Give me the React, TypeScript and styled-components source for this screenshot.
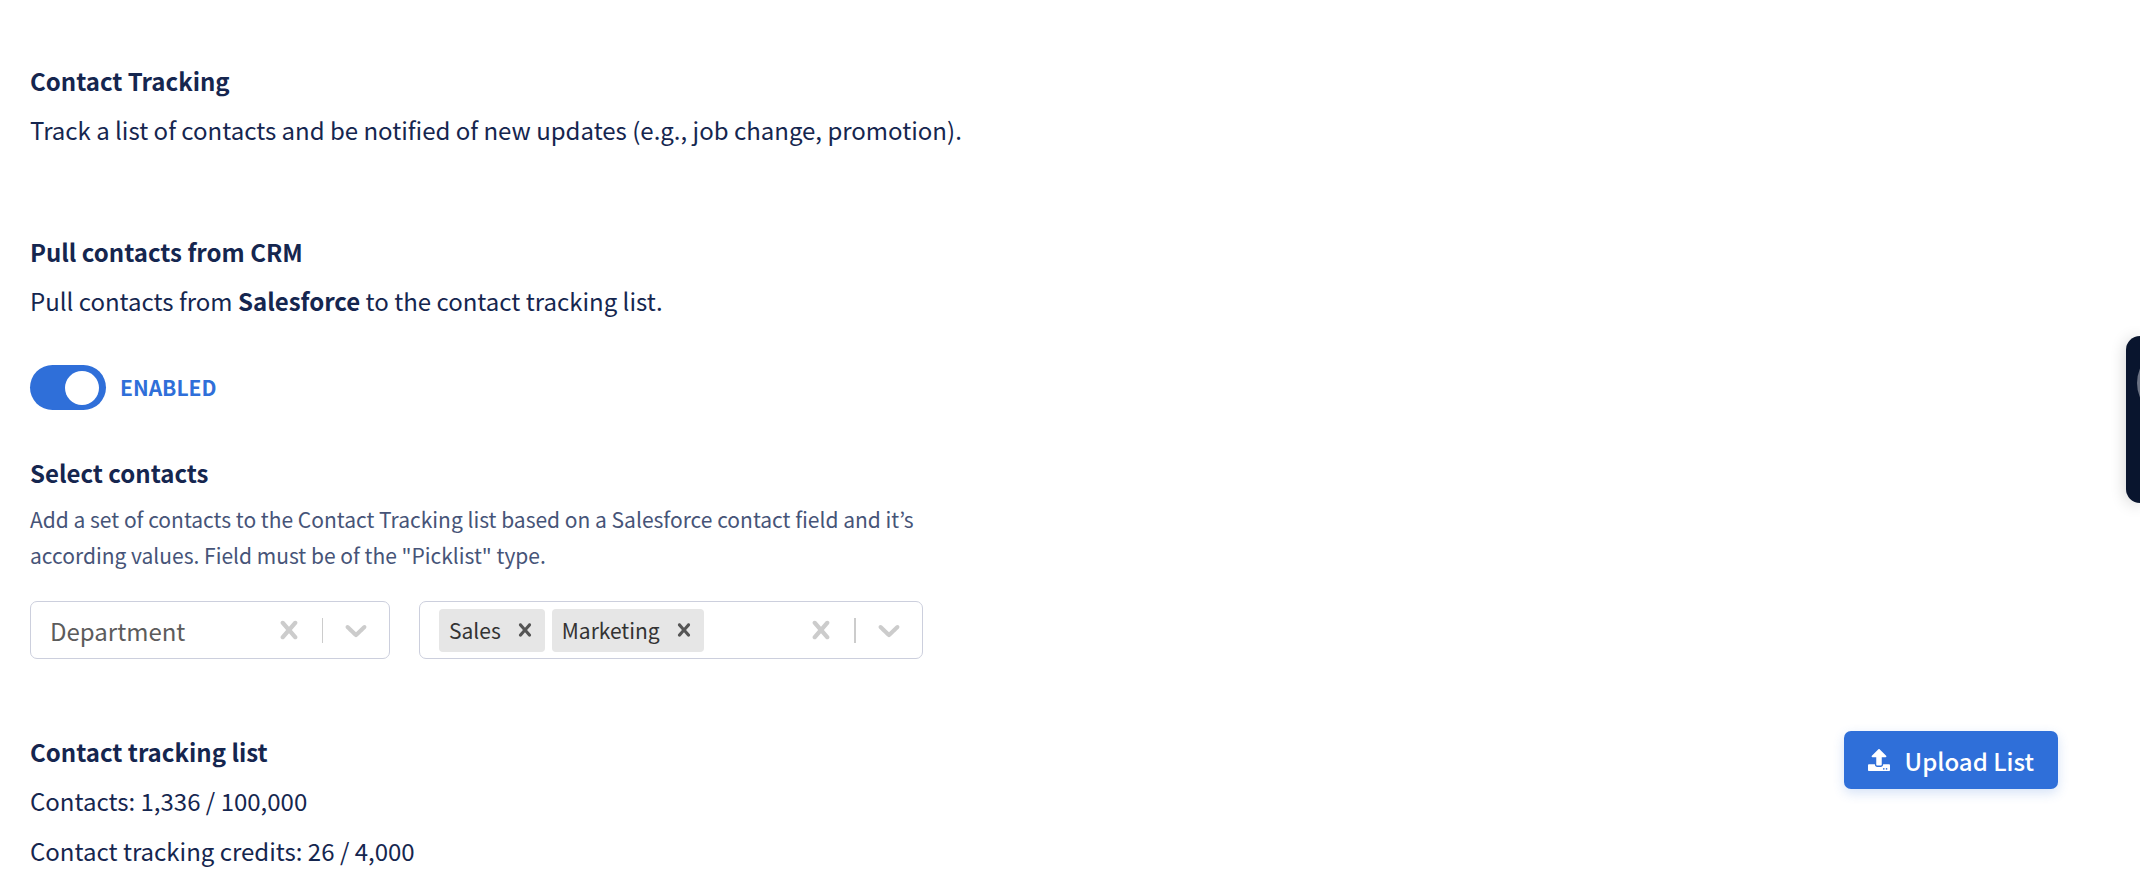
import React, { useState } from "react";
import styled, { createGlobalStyle } from "styled-components";
import { FaUpload } from "react-icons/fa";

const GlobalStyle = createGlobalStyle`
  *, *::before, *::after { box-sizing: border-box; }
  body {
    margin: 0;
    background: #ffffff;
    color: #15264f;
    font-family: "Source Sans Pro", "Noto Sans CJK KR", "Noto Sans", sans-serif;
    font-size: 24px;
    line-height: 49px;
  }
  button, input, select { font-family: inherit; }
`;

const Page = styled.main`
  display: flex;
  flex-direction: column;
  padding: 56px 82px 8px 30px;
`;

const Section = styled.section<{ $gap?: number }>`
  margin-bottom: ${({ $gap = 0 }) => $gap}px;
`;

const Heading = styled.h2`
  margin: 0;
  font-size: 24px;
  font-weight: 700;
`;

const Text = styled.p`
  margin: 0;
`;

const Strong = styled.strong`
  font-weight: 700;
`;

const Hint = styled.p`
  max-width: 893px;
  margin: 4px 0 28px;
  color: #465478;
  font-size: 21px;
  line-height: 36px;
`;

const ToggleLabel = styled.label`
  display: flex;
  align-items: center;
  gap: 14px;
  width: fit-content;
  margin: 40px 0 38px;
  color: #2f6fd9;
  font-size: 21px;
  font-weight: 700;
  line-height: 45px;
  cursor: pointer;
`;

const ToggleInput = styled.input`
  appearance: none;
  display: flex;
  align-items: center;
  flex: none;
  width: 76px;
  height: 45px;
  margin: 0;
  padding: 0 7px;
  border-radius: 23px;
  background: #b8bfcc;
  cursor: pointer;

  &::before {
    content: "";
    width: 34px;
    height: 34px;
    border-radius: 50%;
    background: #ffffff;
  }
  &:checked {
    justify-content: flex-end;
    background: #2f6fd9;
  }
`;

const Fields = styled.div`
  display: flex;
  flex-wrap: wrap;
  gap: 29px;
`;

const Control = styled.div<{ $width: number }>`
  display: flex;
  align-items: center;
  width: ${({ $width }) => $width}px;
  height: 58px;
  padding-left: 19px;
  border: 1px solid #cccfdd;
  border-radius: 7px;
  background: #ffffff;
`;

const FieldSelect = styled.select`
  appearance: none;
  flex: 1;
  min-width: 0;
  height: 56px;
  padding: 0;
  border: 0;
  background: transparent;
  color: #5c5c5c;
  font-size: 24px;
`;

const Chips = styled.ul`
  display: flex;
  gap: 7px;
  margin: 0;
  padding: 0;
  list-style: none;
`;

const Chip = styled.li`
  display: flex;
  align-items: center;
  height: 43px;
  padding: 0 7px 0 10px;
  border-radius: 4px;
  background: #e6e6e6;
  color: #333333;
  font-size: 21px;
  line-height: 43px;
`;

const IconButton = styled.button<{ $inset: number; $tone: string }>`
  display: flex;
  flex: none;
  padding: 0 ${({ $inset }) => $inset}px;
  border: 0;
  background: transparent;
  color: ${({ $tone }) => $tone};
  cursor: pointer;
`;

const ChipRemove = styled(IconButton)`
  padding: 0 0 0 11px;
`;

const ValueInput = styled.input`
  flex: 1;
  min-width: 0;
  height: 43px;
  padding: 0 4px;
  border: 0;
  outline: 0;
  background: transparent;
  font-size: 21px;
`;

const Separator = styled.span<{ $width: number }>`
  flex: none;
  width: ${({ $width }) => $width}px;
  height: 25px;
  background: #cccccc;
`;

const ListSection = styled.section`
  display: flex;
  align-items: flex-start;
  justify-content: space-between;
`;

const ListRow = styled(Text)`
  line-height: 50px;
`;

const UploadButton = styled.button`
  display: flex;
  align-items: center;
  gap: 15px;
  height: 58px;
  margin-top: 4px;
  padding: 0 24px;
  border: 0;
  border-radius: 7px;
  background: #2f6fd9;
  box-shadow: 0 4px 12px rgba(47, 111, 217, 0.2);
  color: #ffffff;
  font-size: 24px;
  font-weight: 500;
  cursor: pointer;
`;

const Widget = styled.aside`
  position: fixed;
  top: 336px;
  right: 0;
  width: 14px;
  height: 167px;
  border-radius: 14px 0 0 14px;
  background: #09152e;
  box-shadow: 0 2px 16px rgba(0, 0, 0, 0.2);
`;

const WidgetWindow = styled.div`
  height: 100%;
  padding: 11px 0 0 11px;
  overflow: hidden;
`;

const WidgetDial = styled.div`
  width: 72px;
  height: 72px;
  border-radius: 50%;
  background: #6b7283;
`;

function CrossIcon({ size }: { size: number }) {
  return (
    <svg width={size} height={size} viewBox="0 0 20 20" fill="currentColor" aria-hidden="true">
      <path d="M14.348 14.849c-0.469 0.469-1.229 0.469-1.697 0l-2.651-3.03-2.651 3.029c-0.469 0.469-1.229 0.469-1.697 0-0.469-0.469-0.469-1.229 0-1.697l2.758-3.15-2.759-3.152c-0.469-0.469-0.469-1.228 0-1.697s1.228-0.469 1.697 0l2.652 3.031 2.651-3.031c0.469-0.469 1.228-0.469 1.697 0s0.469 1.229 0 1.697l-2.758 3.152 2.758 3.15c0.469 0.469 0.469 1.229 0 1.698z" />
    </svg>
  );
}

function ChevronIcon() {
  return (
    <svg width={36} height={36} viewBox="0 0 20 20" fill="currentColor" aria-hidden="true">
      <path d="M4.516 7.548c0.436-0.446 1.043-0.481 1.576 0l3.908 3.747 3.908-3.747c0.533-0.481 1.141-0.446 1.574 0 0.436 0.445 0.408 1.197 0 1.615-0.406 0.418-4.695 4.502-4.695 4.502-0.217 0.223-0.502 0.335-0.787 0.335s-0.57-0.112-0.789-0.335c0 0-4.287-4.084-4.695-4.502s-0.436-1.17 0-1.615z" />
    </svg>
  );
}

function Indicators({ name, separator, onClear }: { name: string; separator: number; onClear: () => void }) {
  return (
    <>
      <IconButton type="button" $inset={15} $tone="#cccccc" aria-label={`Clear ${name}`} onClick={onClear}>
        <CrossIcon size={36} />
      </IconButton>
      <Separator $width={separator} />
      <IconButton type="button" $inset={15} $tone="#cccccc" aria-label={`Open ${name}`}>
        <ChevronIcon />
      </IconButton>
    </>
  );
}

export default function App() {
  const [enabled, setEnabled] = useState(true);
  const [field, setField] = useState("Department");
  const [values, setValues] = useState(["Sales", "Marketing"]);

  return (
    <>
      <GlobalStyle />
      <Page>
        <Section $gap={73}>
          <Heading>Contact Tracking</Heading>
          <Text>Track a list of contacts and be notified of new updates (e.g., job change, promotion).</Text>
        </Section>

        <Section>
          <Heading>Pull contacts from CRM</Heading>
          <Text>
            Pull contacts from <Strong>Salesforce</Strong> to the contact tracking list.
          </Text>
          <ToggleLabel>
            <ToggleInput type="checkbox" role="switch" checked={enabled} onChange={(e) => setEnabled(e.target.checked)} />
            {enabled ? "ENABLED" : "DISABLED"}
          </ToggleLabel>
        </Section>

        <Section $gap={68}>
          <Heading>Select contacts</Heading>
          <Hint>
            Add a set of contacts to the Contact Tracking list based on a Salesforce contact field and it’s according
            values. Field must be of the "Picklist" type.
          </Hint>
          <Fields>
            <Control $width={360}>
              <FieldSelect aria-label="Contact field" value={field} onChange={(e) => setField(e.target.value)}>
                <option value="" />
                <option>Department</option>
              </FieldSelect>
              <Indicators name="field" separator={1} onClear={() => setField("")} />
            </Control>
            <Control $width={504}>
              <Chips>
                {values.map((value) => (
                  <Chip key={value}>
                    {value}
                    <ChipRemove
                      type="button"
                      $inset={0}
                      $tone="#555555"
                      aria-label={`Remove ${value}`}
                      onClick={() => setValues(values.filter((v) => v !== value))}
                    >
                      <CrossIcon size={26} />
                    </ChipRemove>
                  </Chip>
                ))}
              </Chips>
              <ValueInput type="text" aria-label="Field values" />
              <Indicators name="values" separator={2} onClear={() => setValues([])} />
            </Control>
          </Fields>
        </Section>

        <ListSection>
          <div>
            <Heading>Contact tracking list</Heading>
            <ListRow>Contacts: 1,336 / 100,000</ListRow>
            <ListRow>Contact tracking credits: 26 / 4,000</ListRow>
          </div>
          <UploadButton type="button">
            <FaUpload size={22} aria-hidden="true" />
            Upload List
          </UploadButton>
        </ListSection>
      </Page>
      <Widget aria-label="Side widget">
        <WidgetWindow>
          <WidgetDial />
        </WidgetWindow>
      </Widget>
    </>
  );
}
